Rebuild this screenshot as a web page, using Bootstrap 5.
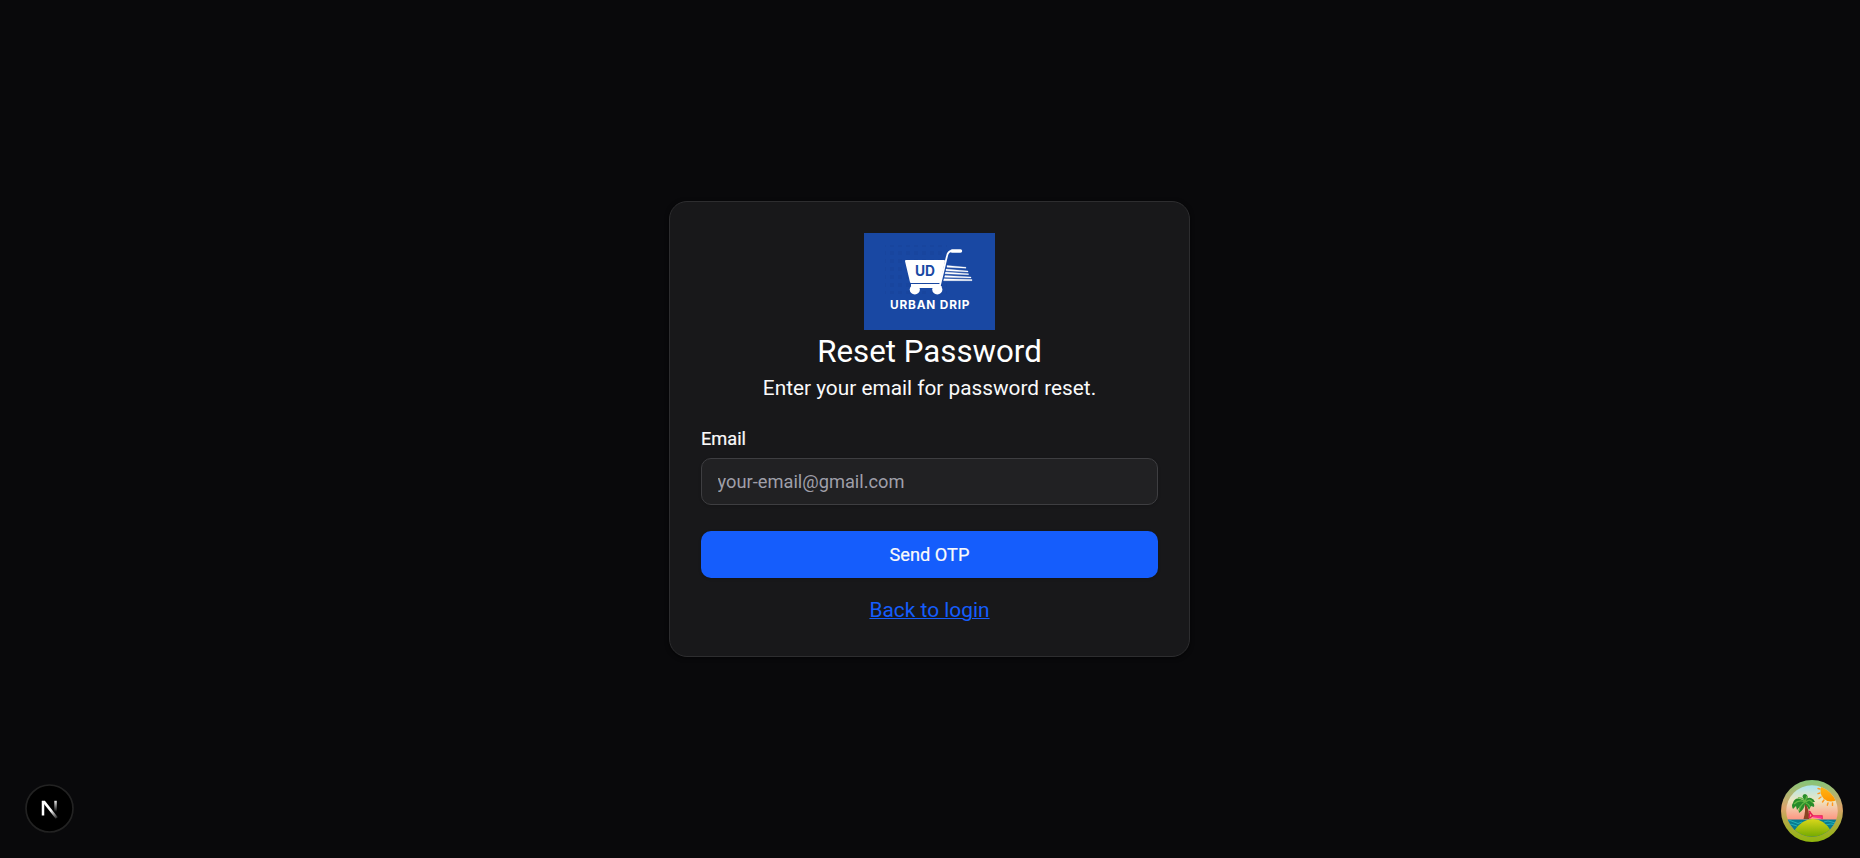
<!DOCTYPE html>
<html lang="en" data-bs-theme="dark">
<head>
<meta charset="utf-8">
<meta name="viewport" content="width=device-width, initial-scale=1">
<title>Reset Password</title>
<link href="https://cdn.jsdelivr.net/npm/bootstrap@5.3.0/dist/css/bootstrap.min.css" rel="stylesheet">
<style>
body{background:#09090b;color:#fafafa;font-family:Roboto,"Liberation Sans",sans-serif;overflow:hidden}
.page-main{padding-right:1px}
.reset-card{width:521px;height:456px;padding:31px;background:#18181a;border:1px solid #2d2d2f;border-radius:18px;box-shadow:0 1px 4px rgba(0,0,0,.6)}
.brand-logo{width:131px;height:97px;display:block}
.reset-title{font-size:31.25px;line-height:42px;font-weight:400;margin:1px 0 0}
.reset-text{font-size:20.8px;line-height:31px;margin:0}
.email-label{font-size:18.2px;line-height:18px;margin:26px 0 10px;font-weight:400;-webkit-text-stroke:.2px currentColor}
.email-input,.email-input:focus{height:47px;font-size:18.25px;padding:0 15.6px;background:#212123;border:1px solid #3e3e41;border-radius:10px;box-shadow:0 1px 3px rgba(0,0,0,.15)}
.email-input::placeholder{color:#9f9fa9;opacity:1}
.send-btn{height:47px;margin-top:26px;background:#155dfc;color:#fafafa;border:0;border-radius:10px;font-size:18.2px;font-weight:400;-webkit-text-stroke:.2px currentColor;padding:0;box-shadow:0 1px 3px rgba(0,0,0,.2)}
.login-link{color:#155dfc;font-size:20.9px;line-height:31px;margin-top:17px;text-decoration-thickness:1px}
.login-link:hover{color:#155dfc}
.next-badge{position:fixed;left:25px;bottom:25px;width:49px;height:49px}
.palm-badge{position:fixed;left:1781px;top:780px;width:62px;height:62px}
</style>
</head>
<body>
<main class="page-main vh-100 d-flex align-items-center justify-content-center">
<section class="card reset-card">
<div class="d-flex flex-column align-items-center text-center">
<svg class="brand-logo" viewBox="0 0 131 97" role="img" aria-label="Urban Drip">
<defs><pattern id="dots" width="8" height="8" patternUnits="userSpaceOnUse"><rect x="2" y="2" width="4" height="4" fill="#123d8f" opacity=".22"/></pattern></defs>
<rect width="131" height="97" fill="#1948a3"/>
<rect x="21" y="12" width="62" height="49" fill="url(#dots)"/>
<path d="M42 28H80L75.500 49H47Z" fill="#fff" stroke="#fff" stroke-width="2" stroke-linejoin="round"/>
<path d="M47 52H76L83 23Q84 18 88 18" fill="none" stroke="#fff" stroke-width="1.800"/>
<path d="M88 18H96.500" stroke="#fff" stroke-width="3.400" stroke-linecap="round"/>
<path d="M47 53H78L76 55H49Z" fill="#fff"/>
<circle cx="50.800" cy="56.500" r="5.100" fill="#fff"/><circle cx="73.300" cy="56.500" r="5.100" fill="#fff"/>
<path d="M83 32.500L102 34.300V35.200L83 34.200ZM82 36L104 38V39L82 37.800ZM81.500 39L104.500 40.700V41.700L81 40.800ZM81 42.500L107 44V45L80.500 44.200ZM80 45.700L108 46.500V47.700L79.500 47.700Z" fill="#fff" stroke="#fff" stroke-width=".3"/>
<text x="51" y="43.200" font-family="Inter,sans-serif" font-weight="700" font-size="14" textLength="20" lengthAdjust="spacingAndGlyphs" fill="#1948a3">UD</text>
<text x="26" y="76" font-family="Inter,sans-serif" font-weight="700" font-size="11.800" textLength="79.500" lengthAdjust="spacing" fill="#fff">URBAN DRIP</text>
</svg>
<h1 class="reset-title">Reset Password</h1>
<p class="reset-text">Enter your email for password reset.</p>
</div>
<form class="d-flex flex-column" onsubmit="return false">
<label class="email-label" for="email">Email</label>
<input class="form-control email-input" id="email" type="email" placeholder="your-email@gmail.com">
<button class="btn btn-primary send-btn w-100" type="submit">Send OTP</button>
<a class="login-link align-self-center" href="#">Back to login</a>
</form>
</section>
</main>
<svg class="next-badge" viewBox="0 0 49 49" aria-label="Next.js">
<defs><linearGradient id="nd" x1="26" y1="26" x2="33" y2="34" gradientUnits="userSpaceOnUse"><stop stop-color="#fff"/><stop offset="1" stop-color="#fff" stop-opacity="0.100"/></linearGradient><linearGradient id="ns" x1="0" y1="16" x2="0" y2="28" gradientUnits="userSpaceOnUse"><stop stop-color="#fff"/><stop offset="1" stop-color="#fff" stop-opacity="0"/></linearGradient></defs>
<circle cx="24.500" cy="24.500" r="23.500" fill="#000" stroke="#222" stroke-width="1.700"/>
<path d="M18 31.500V17" stroke="#fff" stroke-width="2.500"/>
<path d="M16.800 16.800H19.900L32.800 33.300L30.700 34.700L17 17.500Z" fill="url(#nd)"/>
<path d="M29.300 16.800h2.500v11h-2.500z" fill="url(#ns)"/>
</svg>
<svg class="palm-badge" viewBox="0 0 62 62" aria-label="Query devtools">
<defs>
<linearGradient id="ring" x1="0" y1="0" x2="0" y2="1"><stop stop-color="#83c779"/><stop offset=".45" stop-color="#dda36b"/><stop offset=".65" stop-color="#b4ab46"/><stop offset="1" stop-color="#8fb50c"/></linearGradient>
<linearGradient id="sky" x1="0" y1="0" x2="0" y2="1"><stop stop-color="#a9e4ef"/><stop offset=".3" stop-color="#eee6c0"/><stop offset=".7" stop-color="#ff8e7c"/></linearGradient>
<linearGradient id="isle" x1="0" y1="0" x2="0" y2="1"><stop stop-color="#d9d71a"/><stop offset="1" stop-color="#72a900"/></linearGradient>
<linearGradient id="sun" x1="0" y1="0" x2="0" y2="1"><stop stop-color="#ffc51c"/><stop offset="1" stop-color="#ff9500"/></linearGradient>
<clipPath id="scene"><circle cx="31" cy="31" r="25.800"/></clipPath>
</defs>
<circle cx="31" cy="31" r="31" fill="url(#ring)"/>
<g clip-path="url(#scene)">
<rect x="5" y="5" width="52" height="52" fill="url(#sky)"/>
<rect x="5" y="39.500" width="52" height="19" fill="#087c91"/>
<path d="M5 42q4-3 8 0t8 0M5 45q5-2 11 1M43 42q4-2 8 0t7 0M44 45q5-2 13 0" fill="none" stroke="#28b1b7" stroke-width="1"/>
<circle cx="50" cy="11" r="10.500" fill="url(#sun)"/>
<path d="M39 9l-2-.5M39 13l-2 .6M40 17l-2 1.500M43 20l-1.500 2M47 23l-.7 2.200M51.500 23v2.400" stroke="#ff9822" stroke-width="1.400" stroke-linecap="round"/>
<path d="M13 51Q21 39 32 39T50 51Q42 57 31 57T13 51Z" fill="url(#isle)"/>
</g>
<path d="M23.500 24Q25 31 22.500 39h6Q28 30 25 23Z" fill="#8a4423"/>
<path d="M24 21Q14 15 12 23Q10 25 12 29L15 26L16 30L20 25Q17 29 18 33Q23 30 24 24Q27 27 28 30L30 26L33 27Q34 24 31 22L34 22Q33 19 30 18Q26 17 26 20Q28 15 24 14Q19 15 24 21Z" fill="#278c2a"/>
<path d="M13 24Q18 19 24 22Q19 25 18 31M17 18Q22 17 24 22L26 16M25 22Q29 18 32 23M25 23Q28 24 29 27" fill="none" stroke="#64b744" stroke-width="1.300"/>
<path d="M28 31l4 5h9v3M29 31l-1 7M32 35l-3 3" fill="none" stroke="#e51e53" stroke-width="1.400"/>
<path d="M32 36l9 .6v2.200l-9-1.500z" fill="#ff2e91"/>
</svg>
<script src="https://cdn.jsdelivr.net/npm/bootstrap@5.3.0/dist/js/bootstrap.bundle.min.js"></script>
</body>
</html>
